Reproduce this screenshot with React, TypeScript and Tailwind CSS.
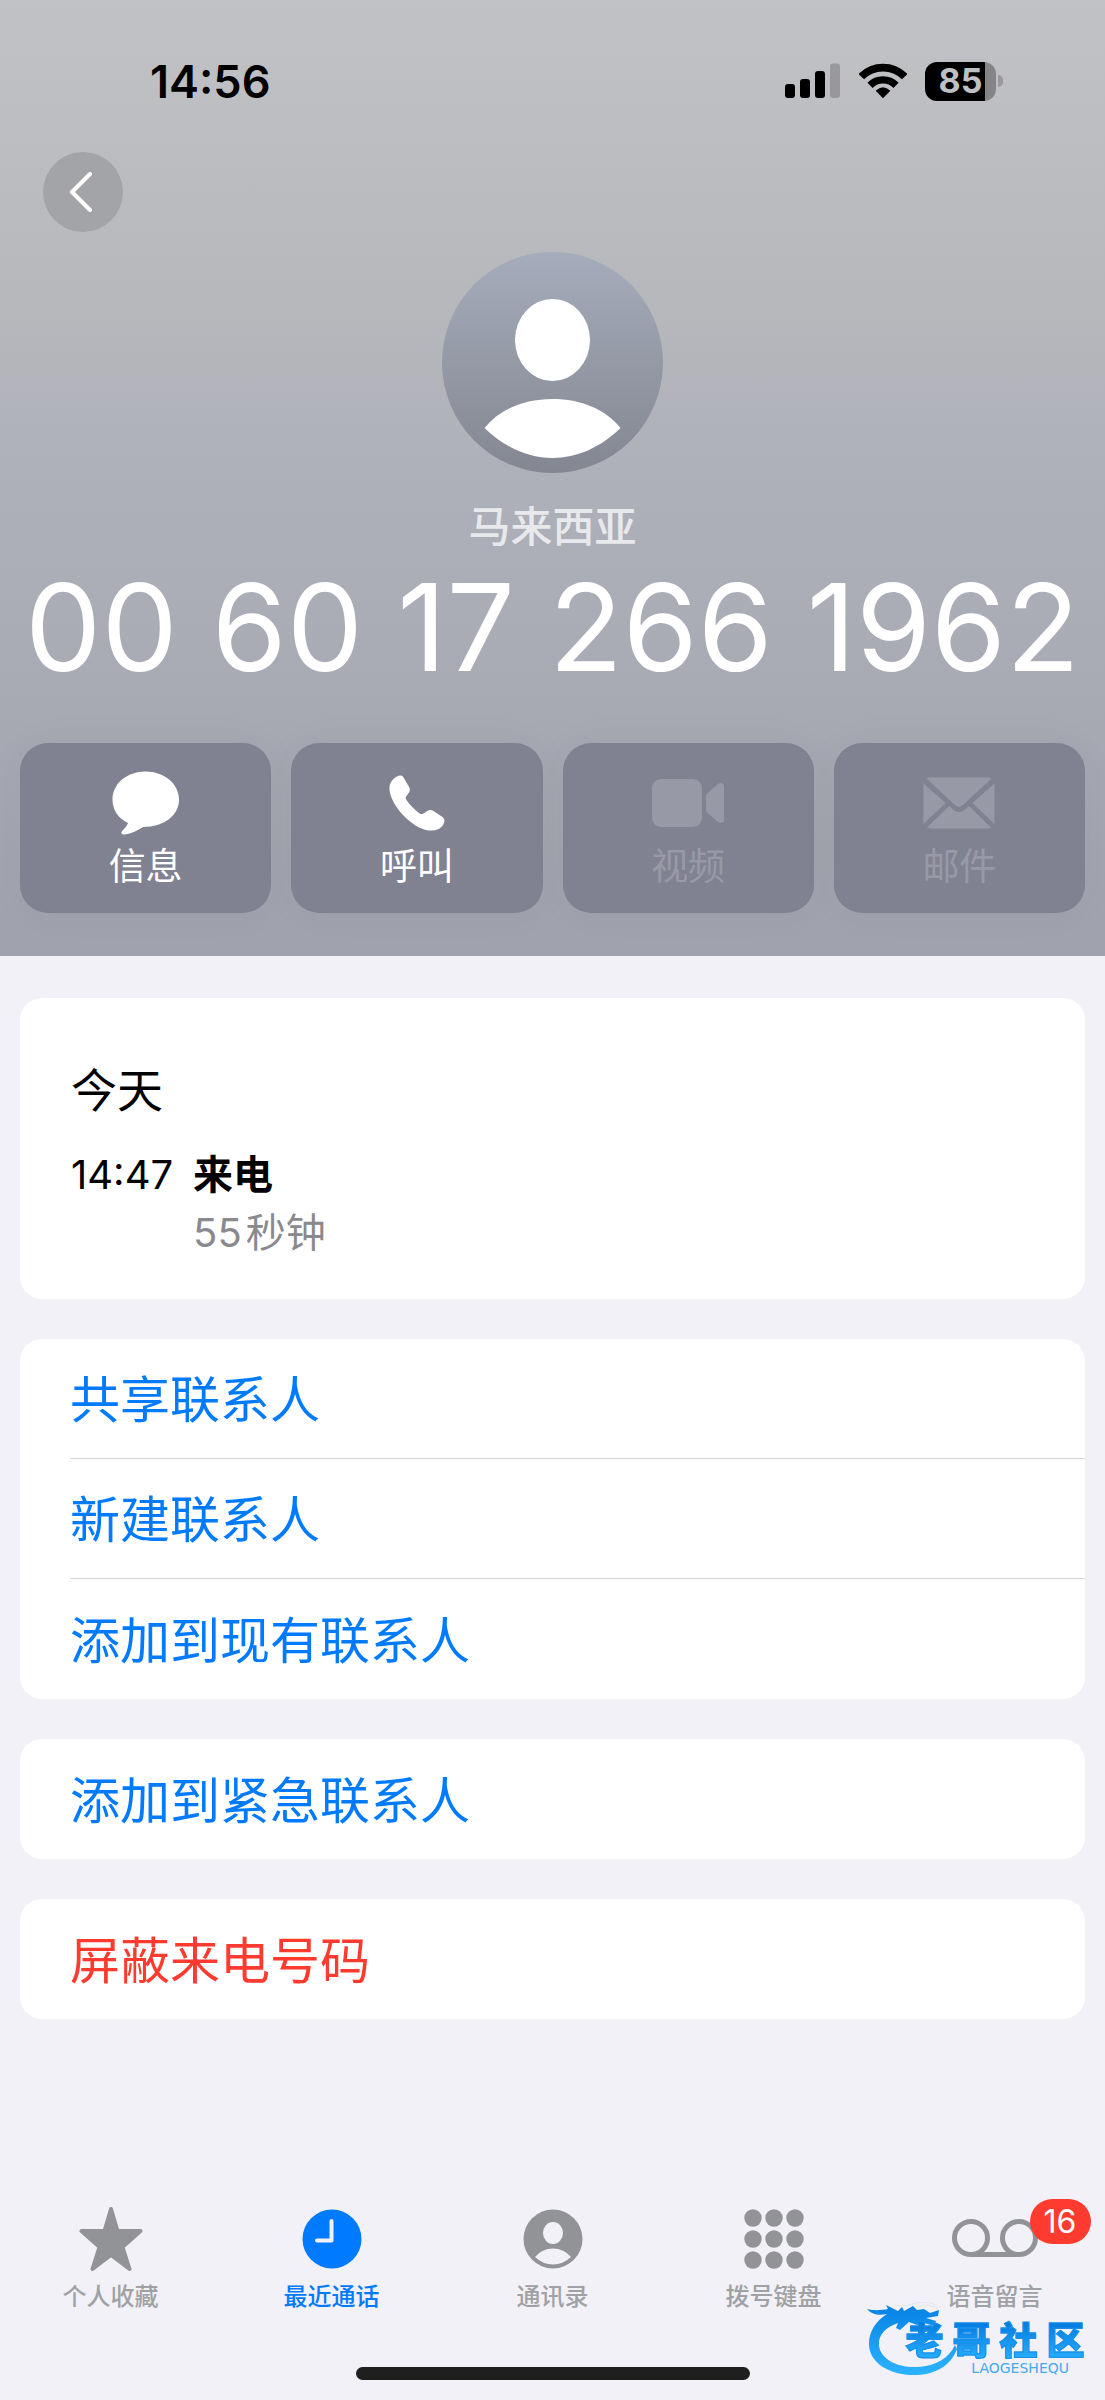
import React from 'react'

type IconProps = { className?: string }

const MessageIcon = ({ className }: IconProps) => (
  <svg viewBox="0 0 68 64" className={className} fill="currentColor" aria-hidden="true">
    <path d="M33.500 0.500C52 0.500 67 12.500 67 28.500S52 56 31 56C26 59.500 19 62.500 13 63.500C10 64 8.500 62 10 60C13 57 15 55 16 52C6 47.500 0.500 38.500 0.500 28.500C0.500 12.500 15 0.500 33.500 0.500Z" />
  </svg>
)

const PhoneIcon = ({ className }: IconProps) => (
  <svg viewBox="0 0 56 56" className={className} fill="currentColor" aria-hidden="true">
    <path d="M12 0.500C9 0.500 6 2 3.500 5C1 8 0 11.500 0.500 15C1.500 24 8 34 15 41C22.500 48.500 31 54.500 40 55.500C46 56 51 54.500 54 50C56 47 56 44 53.500 42L44.500 36C42 34.500 40 35 37.500 36.500L34 38.800C32.500 39.500 31 39 29.500 37.800C25 34 20 29 17.500 25C16.500 23.500 16.500 22.500 17.300 21.300L20 17.500C21.300 15.500 21 13.500 19.800 11.500L14.500 2.500C13.800 1.200 13 0.600 12 0.500Z" />
  </svg>
)

const VideoIcon = ({ className }: IconProps) => (
  <svg viewBox="0 0 72 48" className={className} fill="currentColor" aria-hidden="true">
    <rect width="50" height="48" rx="9" />
    <path d="M54 17.500Q54 15.500 55.500 14L66 5Q68 3.500 70 4.200Q72 5 72 7.500V40.500Q72 43 70 43.800Q68 44.500 66 43L55.500 34Q54 32.500 54 30.500Z" />
  </svg>
)

const MailIcon = ({ className }: IconProps) => (
  <svg viewBox="0 0 72 52" className={className} fill="currentColor" aria-hidden="true">
    <path d="M3.500 1.500Q5 0.500 7.500 0.500H64.500Q67 0.500 68.500 1.500L40 28Q36 31.500 32 28Z" />
    <path d="M0.500 6.500L22.500 26L0.500 47Z" />
    <path d="M71.500 6.500L49.500 26L71.500 47Z" />
    <path d="M26 29L30 32.500Q36 37.500 42 32.500L46 29L68 50.500Q66.500 51.500 64.500 51.500H7.500Q5.500 51.500 4 50.500Z" />
  </svg>
)

const StarIcon = ({ className }: IconProps) => (
  <svg viewBox="0 0 64 64" className={className} fill="currentColor" aria-hidden="true">
    <path
      d="M32 2L38.500 24H61.500L43.500 40L50.500 62L32 48L13.500 62L20.500 40L2.500 24H25.500Z"
      stroke="currentColor"
      strokeWidth="4"
      strokeLinejoin="round"
    />
  </svg>
)

const ClockIcon = ({ className }: IconProps) => (
  <svg viewBox="0 0 60 60" className={className} aria-hidden="true">
    <circle cx="30" cy="30" r="29.500" fill="currentColor" />
    <path
      d="M29.500 12V31.500H15"
      fill="none"
      stroke="#f2f1f7"
      strokeWidth="4"
      strokeLinecap="round"
      strokeLinejoin="round"
    />
  </svg>
)

const PersonIcon = ({ className }: IconProps) => (
  <svg viewBox="0 0 60 60" className={className} aria-hidden="true">
    <circle cx="30" cy="30" r="29.500" fill="currentColor" />
    <ellipse cx="30" cy="24" rx="10" ry="11" fill="#f2f1f7" />
    <path d="M12 48Q19 39.500 30 39.500T48 48Q40 55.500 30 55.500T12 48Z" fill="#f2f1f7" />
  </svg>
)

const KeypadIcon = ({ className }: IconProps) => (
  <svg viewBox="0 0 60 60" className={className} fill="currentColor" aria-hidden="true">
    {[9, 30, 51].map((cy) =>
      [9, 30, 51].map((cx) => <circle key={`${cx}-${cy}`} cx={cx} cy={cy} r="8.700" />)
    )}
  </svg>
)

const VoicemailIcon = ({ className }: IconProps) => (
  <svg
    viewBox="0 0 86 60"
    className={className}
    fill="none"
    stroke="currentColor"
    strokeWidth="5"
    aria-hidden="true"
  >
    <circle cx="19" cy="29" r="16.500" />
    <circle cx="67" cy="29" r="16.500" />
    <path d="M19 45.500H67" />
  </svg>
)

const actions = [
  { label: '信息', icon: MessageIcon, size: 'w-17 h-16', disabled: false },
  { label: '呼叫', icon: PhoneIcon, size: 'w-14 h-14', disabled: false },
  { label: '视频', icon: VideoIcon, size: 'w-18 h-12', disabled: true },
  { label: '邮件', icon: MailIcon, size: 'w-18 h-13', disabled: true },
]

const groups = [
  { items: ['共享联系人', '新建联系人', '添加到现有联系人'], color: 'text-[#007aff]' },
  { items: ['添加到紧急联系人'], color: 'text-[#007aff]' },
  { items: ['屏蔽来电号码'], color: 'text-[#ff3b30]' },
]

const tabs = [
  { label: '个人收藏', icon: StarIcon, size: 'w-16 h-16', active: false, badge: 0 },
  { label: '最近通话', icon: ClockIcon, size: 'w-15 h-15', active: true, badge: 0 },
  { label: '通讯录', icon: PersonIcon, size: 'w-15 h-15', active: false, badge: 0 },
  { label: '拨号键盘', icon: KeypadIcon, size: 'w-15 h-15', active: false, badge: 0 },
  { label: '语音留言', icon: VoicemailIcon, size: 'w-[86px] h-15', active: false, badge: 16 },
]

const StatusBar = () => (
  <div className="flex h-[152px] items-center justify-between pt-[10px] pr-[102px] pl-[150px] text-black">
    <span className="text-[45px] leading-none font-semibold">14:56</span>
    <div className="flex items-center gap-[18px]">
      <svg viewBox="0 0 56 36" className="h-9 w-14" fill="currentColor" aria-hidden="true">
        <rect x="0" y="21" width="10" height="14" rx="3" />
        <rect x="15" y="16" width="10" height="19" rx="3" />
        <rect x="30" y="8" width="10" height="27" rx="3" />
        <rect x="45" y="0.500" width="10" height="34.500" rx="3" opacity="0.2" />
      </svg>
      <svg viewBox="0 0 144 108" className="h-9 w-12" fill="none" stroke="currentColor" aria-hidden="true">
        <path d="M7 41A91 91 0 0 1 137 41" strokeWidth="23" />
        <path d="M33 67A55 55 0 0 1 111 67" strokeWidth="22" />
        <path d="M72 106L50 83Q72 62 94 83Z" fill="currentColor" stroke="none" />
      </svg>
      <div className="flex items-center gap-[2px]">
        <div className="flex h-[39px] w-[71px] items-center justify-center rounded-xl bg-[linear-gradient(90deg,#000_85%,#858588_85%)] text-[34px] leading-none font-bold text-[#bfc0c4]">
          85
        </div>
        <div className="h-3 w-[5px] rounded-r-full bg-[#9a9a9e]" />
      </div>
    </div>
  </div>
)

const Avatar = () => (
  <svg viewBox="0 0 221 221" className="size-[221px]" aria-hidden="true">
    <defs>
      <linearGradient id="avatar" x1="0" y1="0" x2="0" y2="1">
        <stop offset="0" stopColor="#a5acbb" />
        <stop offset="1" stopColor="#848791" />
      </linearGradient>
    </defs>
    <circle cx="110.500" cy="110.500" r="110.500" fill="url(#avatar)" />
    <ellipse cx="110.500" cy="88" rx="37.500" ry="41" fill="#fff" />
    <path d="M42.500 176C58 157 82 147 110.500 147S163 157 178.500 176C159 195 135 206 110.500 206S62 195 42.500 176Z" fill="#fff" />
  </svg>
)

const Watermark = () => (
  <div className="absolute right-4 bottom-6 h-[74px] w-[222px]">
    <svg viewBox="0 0 222 74" className="absolute inset-0 h-full w-full" aria-hidden="true">
      <defs>
        <linearGradient id="dragon" x1="0" y1="0" x2="0" y2="1">
          <stop offset="0" stopColor="#0681e4" />
          <stop offset="1" stopColor="#2cb4ff" />
        </linearGradient>
      </defs>
      <path
        d="M0 7C8 9 15 8 21 7L19 3L31 9L35 5L37 9L46 4L50 8L57 7L63 11L72 8L71 14L59 16L69 19L67 24L54 20L50 23L42 20L33 28L29 26L31 21C19 25 11 33 12 43C13 57 30 66 51 65C69 64 82 56 88 43L90 47C85 61 72 72 50 73C23 74 2 61 2 42C2 29 9 19 20 12C12 14 4 12 0 7Z"
        fill="url(#dragon)"
      />
      <path d="M28 3C40 6 45 1 56 0C65 0 70 3 71 7C63 2 56 3 49 5" fill="none" stroke="#e2e7ee" strokeWidth="1" />
    </svg>
    <div className="absolute top-5 right-0 grid w-[188px] grid-cols-4 bg-linear-to-b from-[#0679de] to-[#27adfb] bg-clip-text text-center text-[38px] leading-9 font-black text-transparent [-webkit-text-stroke:1px_#128fec]">
      {['老', '哥', '社', '区'].map((char) => (
        <span key={char}>{char}</span>
      ))}
    </div>
    <span className="absolute right-5 bottom-0 font-[DejaVu_Sans] text-[14px] leading-4 text-[#45a9ee]">
      LAOGESHEQU
    </span>
  </div>
)

export default function App() {
  return (
    <div className="relative flex min-h-screen flex-col bg-[#f2f1f7] font-['Inter','Noto_Sans_CJK_SC',sans-serif]">
      <header className="bg-[linear-gradient(180deg,#c1c2c6_0%,#b6b7bb_34%,#afb1ba_48%,#9fa1ad_100%)] pb-[43px]">
        <StatusBar />
        <div className="px-[43px]">
          <button
            type="button"
            aria-label="返回"
            className="flex size-20 items-center justify-center rounded-full bg-[#a3a4a8] pr-1"
          >
            <svg viewBox="0 0 22 40" className="h-10 w-[22px]" fill="none" stroke="#fff" strokeWidth="4" strokeLinecap="round" strokeLinejoin="round" aria-hidden="true">
              <path d="M20 2L2 20L20 38" />
            </svg>
          </button>
        </div>

        <div className="mt-5 flex flex-col items-center">
          <Avatar />
          <p className="mt-6 text-[42px] leading-[60px] font-medium text-[#e8e9ec]">马来西亚</p>
          <h1 className="text-[121px] leading-[140px] whitespace-nowrap text-white">00 60 17 266 1962</h1>
        </div>

        <div className="mt-[46px] grid grid-cols-4 gap-5 px-5">
          {actions.map(({ label, icon: Icon, size, disabled }) => (
            <button
              key={label}
              type="button"
              disabled={disabled}
              className="flex h-[170px] flex-col items-center rounded-[28px] bg-[#808292] pt-6 text-white shadow-[0_0_40px_rgba(0,0,0,0.04)] disabled:text-[#9899a6]"
            >
              <span className="flex h-[72px] items-center">
                <Icon className={size} />
              </span>
              <span className="text-[37px] leading-[56px]">{label}</span>
            </button>
          ))}
        </div>
      </header>

      <main className="flex flex-col gap-10 px-5 pt-[42px]">
        {/* Call log */}
        <section className="rounded-[22px] bg-white px-[51px] pt-[60px] pb-[37px] text-[40px] leading-[58px] text-black">
          <h2 className="text-[46px] leading-[64px]">今天</h2>
          <div className="mt-6 flex gap-5">
            <time>14:47</time>
            <div>
              <p className="font-semibold">来电</p>
              <p className="flex gap-1 text-[#8a8a8e]">
                <span>55</span>
                <span>秒钟</span>
              </p>
            </div>
          </div>
        </section>

        {groups.map(({ items, color }) => (
          <section key={items[0]} className="divide-y divide-[#d8d8da] overflow-hidden rounded-[22px] bg-white pl-[50px]">
            {items.map((item) => (
              <button
                key={item}
                type="button"
                className={`block h-[120px] w-full pt-1 text-left text-[50px] ${color}`}
              >
                {item}
              </button>
            ))}
          </section>
        ))}
      </main>

      <nav className="mt-auto grid h-[165px] grid-cols-5">
        {tabs.map(({ label, icon: Icon, size, active, badge }) => (
          <button
            key={label}
            type="button"
            className={`flex flex-col items-center ${active ? 'text-[#007aff]' : 'text-[#929397]'}`}
          >
            <span className="relative flex h-[74px] items-center">
              <Icon className={size} />
              {badge > 0 && (
                <span className="absolute -top-[3px] left-[78px] flex h-[45px] w-[61px] items-center justify-center rounded-full bg-[#ff3b30] text-[32px] leading-none text-white">
                  {badge}
                </span>
              )}
            </span>
            <span className={`text-[24px] leading-[42px] font-medium ${active ? '' : 'text-[#a0a1a5]'}`}>{label}</span>
          </button>
        ))}
      </nav>
      <div className="mx-auto mb-5 h-[13px] w-[394px] rounded-full bg-[#1f1f1f]" />

      <Watermark />
    </div>
  )
}
